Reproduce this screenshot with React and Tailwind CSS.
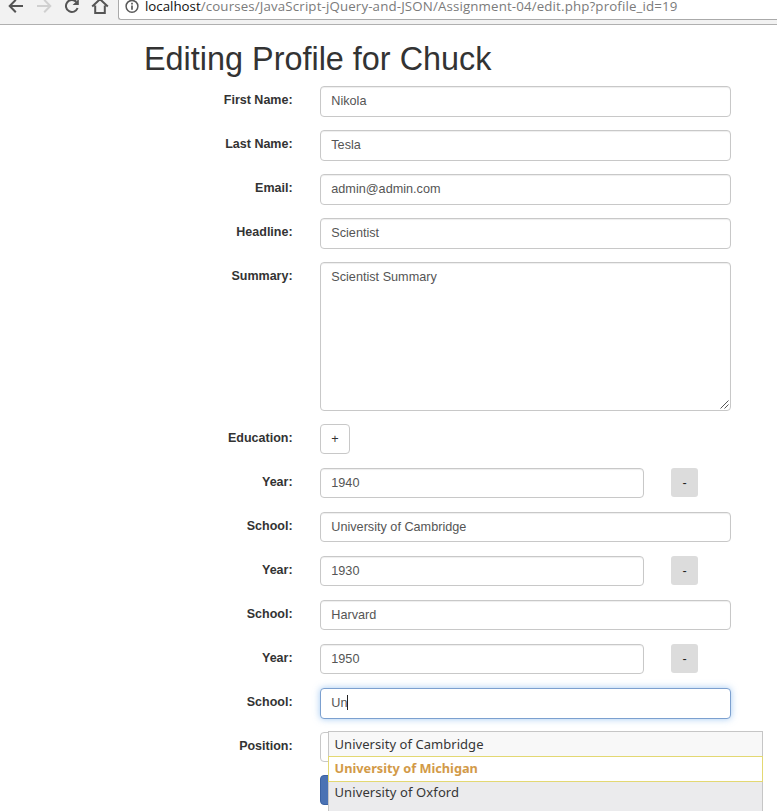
import React from "react";

const FIELD =
  "flex rounded-[4px] border border-[#c8c8c8] bg-white pl-[10.3px] text-[12.67px] leading-[18px] text-[#555] shadow-[inset_0_1px_1px_rgba(0,0,0,0.07)]";

function Row({ label, children, tall }) {
  return (
    <div className={`flex shrink-0 items-start ${tall ? "h-[162px]" : "h-[44px]"}`}>
      <label className="w-[292.6px] shrink-0 pt-[5px] text-right text-[12.5px] leading-[18px] font-bold text-[#333]">
        {label}
      </label>
      <div className="ml-[27.4px] flex items-start">{children}</div>
    </div>
  );
}

function Field({ value, tall }) {
  return <div className={`${FIELD} w-[411px] pt-[5px] ${tall ? "h-[31px]" : "h-[30px]"}`}>{value}</div>;
}

function YearRow({ value }) {
  return (
    <Row label="Year:">
      <div className={`${FIELD} h-[30px] w-[324px] pt-[5px]`}>{value}</div>
      <button className="ml-[27px] flex h-[29px] w-[27px] items-center justify-center rounded-[3px] bg-[#dcdcdc] text-[12.67px] leading-[18px] text-[#222]">
        -
      </button>
    </Row>
  );
}

function Toolbar() {
  return (
    <header className="flex h-[25px] shrink-0 items-start border-b border-[#b0b0b0] bg-[#f2f2f2]">
      <svg className="h-[20px] w-[118px] shrink-0" viewBox="0 0 118 20" fill="none" strokeWidth="2">
        <path d="M23 6H10M15.8 -.2L9.7 6L15.8 12.2" stroke="#555" />
        <path d="M37 6H50M44.2 -.2L50.3 6L44.2 12.2" stroke="#d0d0d0" />
        <path d="M76.3 1.8A6 6 0 1 0 77.6 8" stroke="#555" />
        <path d="M78.8 -1V5H72.6Z" fill="#555" />
        <path d="M92.2 6.6L100 -.8L107.8 6.6M95.2 5.5V13H104.8V5.5" stroke="#555" />
      </svg>
      <div className="flex h-[20px] flex-1 items-start rounded-bl-[3px] border-b border-l border-[#aaa] bg-white">
        <svg className="ml-[6px] h-[14px] w-[15px] shrink-0" viewBox="0 0 15 14" fill="none" stroke="#5a5a5a">
          <circle cx="7" cy="6.3" r="5.9" strokeWidth="1.5" />
          <path d="M7 5.6V9.8M7 2.8V4.4" strokeWidth="1.7" />
        </svg>
        <span className="ml-[5px] block font-['Open_Sans',sans-serif] text-[13.3px] leading-[12px] tracking-[0.14px] whitespace-nowrap text-[#7b7b7b]">
          <span className="tracking-normal text-[#111]">localhost</span>
          /courses/JavaScript-jQuery-and-JSON/Assignment-04/edit.php?profile_id=19
        </span>
      </div>
    </header>
  );
}

function Suggestions() {
  return (
    <ul className="absolute top-[731px] left-[328px] h-[90px] w-[435px] border border-[#c6c6c6] bg-[#ebebed] font-['Noto_Sans',sans-serif] text-[13px] leading-[24px] text-[#363636]">
      <li className="h-[24px] bg-[#f8f8f8] pl-[5.5px] tracking-[0.05px]">University of Cambridge</li>
      <li className="-mx-px h-[26px] border border-[#e3d873] bg-white pl-[5.5px] text-[12.75px] leading-[22px] font-bold text-[#d29a48]">
        University of Michigan
      </li>
      <li className="h-[22px] pl-[5.5px] leading-[20px] tracking-[0.1px]">University of Oxford</li>
    </ul>
  );
}

export default function App() {
  return (
    <div className="relative flex h-[811px] w-[777px] flex-col overflow-hidden bg-white font-['Liberation_Sans',Arial,sans-serif]">
      <Toolbar />
      <h1 className="mt-[16px] mb-[9px] ml-[144px] h-[36px] shrink-0 text-[32.4px] leading-[36px] whitespace-nowrap text-[#333]">
        Editing Profile for Chuck
      </h1>
      <Row label="First Name:"><Field value="Nikola" tall /></Row>
      <Row label="Last Name:"><Field value="Tesla" tall /></Row>
      <Row label="Email:"><Field value="admin@admin.com" tall /></Row>
      <Row label="Headline:"><Field value="Scientist" tall /></Row>
      <Row label="Summary:" tall>
        <div className={`${FIELD} h-[149px] w-[411px] items-start justify-between pt-[5px]`}>
          <span>Scientist Summary</span>
          <svg className="mr-[1px] mb-[1px] h-[9px] w-[9px] self-end" viewBox="0 0 9 9" stroke="#555" strokeWidth="1">
            <path d="M.5 8.5L8.5 .5M4.5 8.5L8.5 4.5" />
          </svg>
        </div>
      </Row>
      <Row label="Education:">
        <button className="flex h-[30px] w-[30px] items-center justify-center rounded-[4px] border border-[#c8c8c8] text-[12.67px] leading-[18px] text-[#333]">
          +
        </button>
      </Row>
      <YearRow value="1940" />
      <Row label="School:"><Field value="University of Cambridge" /></Row>
      <YearRow value="1930" />
      <Row label="School:"><Field value="Harvard" /></Row>
      <YearRow value="1950" />
      <Row label="School:">
        <div className="flex h-[31px] w-[411px] rounded-[4px] border border-[#7ca0cf] bg-white pt-[5px] pl-[10.3px] text-[12.67px] leading-[18px] text-[#555] shadow-[0_0_7px_rgba(102,165,233,0.6)]">
          Un
          <span className="h-[15px] w-px translate-y-[1px] bg-[#222]" />
        </div>
      </Row>
      <Row label="Position:">
        <button className="flex h-[30px] w-[30px] items-center justify-center rounded-[4px] border border-[#c8c8c8]" />
      </Row>
      <div className="-mt-px ml-[320px] h-[30px] w-[50px] shrink-0 rounded-[4px] border border-[#3b62a3] bg-[#4a72b4]" />
      <Suggestions />
    </div>
  );
}
